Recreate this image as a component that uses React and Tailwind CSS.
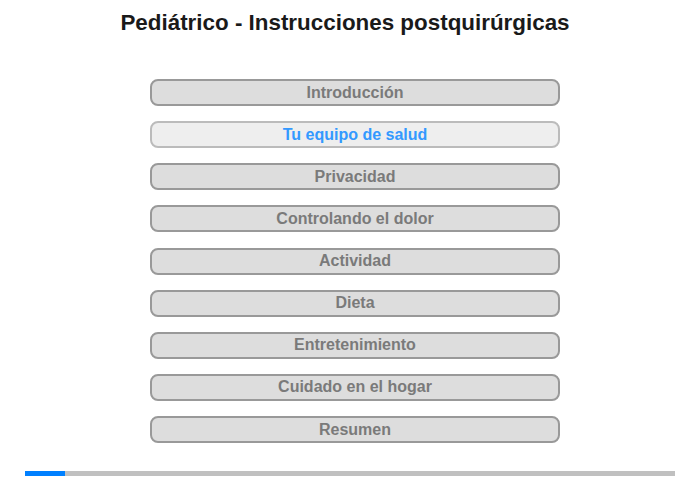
const sections = [
  "Introducción",
  "Tu equipo de salud",
  "Privacidad",
  "Controlando el dolor",
  "Actividad",
  "Dieta",
  "Entretenimiento",
  "Cuidado en el hogar",
  "Resumen",
];

export default function App() {
  const active = 1;
  return (
    <div className="w-[700px] h-[480px] bg-white flex flex-col font-['Liberation_Sans',Arial,sans-serif] overflow-hidden">
      <h1 className="pt-[10px] pr-[10px] text-center text-[22.4px] leading-[26px] font-bold text-[#1a1a1a]">
        Pediátrico - Instrucciones postquirúrgicas
      </h1>
      <div className="mt-[43px] flex flex-col gap-[15.125px] pl-[150px]">
        {sections.map((s, i) =>
          i === active ? (
            <button
              key={s}
              className="w-[410px] h-[27px] rounded-[8px] border-2 border-[#bbbbbb] bg-[#eeeeee] text-[16px] font-bold text-[#3399ff] leading-none"
            >
              {s}
            </button>
          ) : (
            <button
              key={s}
              className="w-[410px] h-[27px] rounded-[8px] border-2 border-[#999999] bg-[#dddddd] text-[16px] font-bold text-[#7a7a7a] leading-none"
            >
              {s}
            </button>
          )
        )}
      </div>
      <div className="mt-[28px] mx-[25px] h-[5px] bg-[#c0c0c0] flex">
        <div className="w-[40px] h-full bg-[#0080ff]" />
      </div>
    </div>
  );
}
